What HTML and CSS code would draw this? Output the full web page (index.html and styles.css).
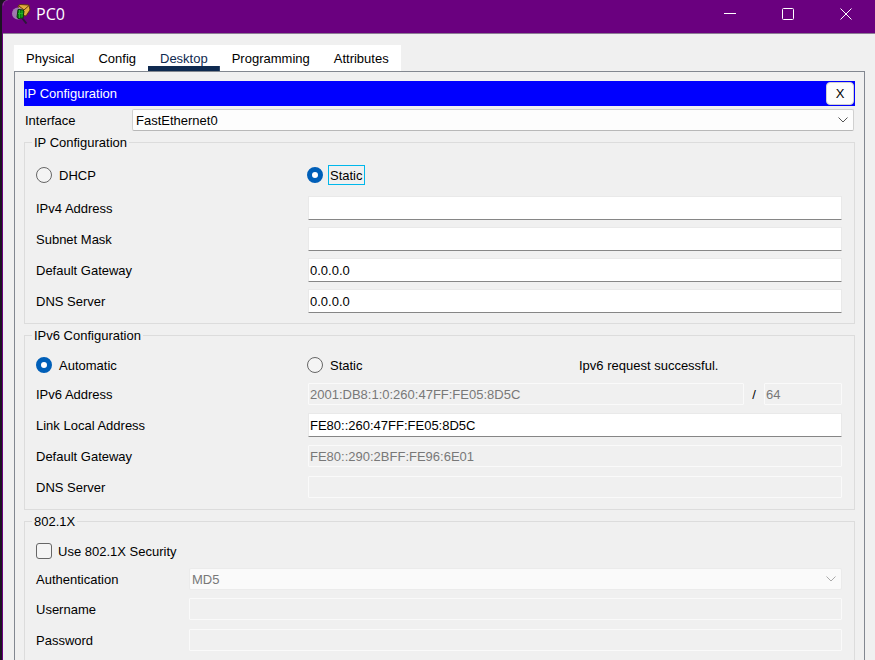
FILE: index.html
```html
<!DOCTYPE html>
<html lang="en">
<head>
<meta charset="utf-8">
<meta name="viewport" content="width=device-width, initial-scale=1">
<title>PC0</title>
<link rel="stylesheet" href="styles.css">
</head>
<body>
<div class="window">
  <header class="titlebar">
    <svg class="app-icon" viewBox="0 0 20 20" aria-hidden="true">
      <path d="M7 2l2-1.500L18 1l1 5-4 6-6-1z" fill="#e0ab3c" stroke="#5c3510" stroke-width="1"/>
      <path d="M8 2l5 4 5-4.500" fill="none" stroke="#5c3510"/>
      <circle cx="7" cy="9.500" r="6" fill="#a078ae"/>
      <path d="M7 5.500l5 .5 1 1-1 7-5 .5L6 13z" fill="#087a12" stroke="#07370a"/>
      <path d="M8.500 6v8M11 6.500v7M7 9.500h5" stroke="#22b527" fill="none"/>
      <path d="M11.500 14.500l4 5" stroke="#2b1838" stroke-width="2"/>
    </svg>
    <h1 class="title">PC0</h1>
    <button class="win-btn" type="button" aria-label="Minimize"><svg viewBox="0 0 12 12"><path d="M0 5.500h12"/></svg></button>
    <button class="win-btn" type="button" aria-label="Maximize"><svg viewBox="0 0 12 12"><rect x=".5" y=".5" width="11" height="11" rx="1"/></svg></button>
    <button class="win-btn" type="button" aria-label="Close"><svg viewBox="0 0 12 12"><path d="M.5.5l11 11M11.500.5l-11 11"/></svg></button>
  </header>

  <main class="content">
    <nav class="tabs">
      <button class="tab" type="button">Physical</button>
      <button class="tab" type="button">Config</button>
      <button class="tab tab-active" type="button">Desktop</button>
      <button class="tab" type="button">Programming</button>
      <button class="tab" type="button">Attributes</button>
    </nav>

    <form class="panel">
      <div class="bar">
        <h2 class="bar-title">IP Configuration</h2>
        <button class="bar-close" type="button">X</button>
      </div>

      <div class="interface">
        <label for="iface">Interface</label>
        <div class="select">
          <select id="iface"><option>FastEthernet0</option></select>
          <svg class="chevron" viewBox="0 0 10 6" aria-hidden="true"><path d="M.5.5L5 5 9.500.5"/></svg>
        </div>
      </div>

      <fieldset class="group group-v4">
        <legend>IP Configuration</legend>
        <div class="modes">
          <label class="choice"><input type="radio" name="v4"><span>DHCP</span></label>
          <label class="choice"><input type="radio" name="v4" checked><span class="focused">Static</span></label>
        </div>
        <div class="row"><label for="ip4">IPv4 Address</label><input class="field" id="ip4" type="text"></div>
        <div class="row"><label for="mask">Subnet Mask</label><input class="field" id="mask" type="text"></div>
        <div class="row"><label for="gw4">Default Gateway</label><input class="field" id="gw4" type="text" value="0.0.0.0"></div>
        <div class="row"><label for="dns4">DNS Server</label><input class="field" id="dns4" type="text" value="0.0.0.0"></div>
      </fieldset>

      <fieldset class="group">
        <legend>IPv6 Configuration</legend>
        <div class="modes">
          <label class="choice"><input type="radio" name="v6" checked><span>Automatic</span></label>
          <label class="choice"><input type="radio" name="v6"><span>Static</span></label>
          <output class="status">Ipv6 request successful.</output>
        </div>
        <div class="row">
          <label for="ip6">IPv6 Address</label>
          <div class="prefixed">
            <input class="field" id="ip6" type="text" value="2001:DB8:1:0:260:47FF:FE05:8D5C" disabled>
            <label class="slash" for="prefix">/</label>
            <input class="field field-prefix" id="prefix" type="text" value="64" disabled>
          </div>
        </div>
        <div class="row"><label for="ll">Link Local Address</label><input class="field" id="ll" type="text" value="FE80::260:47FF:FE05:8D5C"></div>
        <div class="row"><label for="gw6">Default Gateway</label><input class="field" id="gw6" type="text" value="FE80::290:2BFF:FE96:6E01" disabled></div>
        <div class="row"><label for="dns6">DNS Server</label><input class="field" id="dns6" type="text" disabled></div>
      </fieldset>

      <fieldset class="group group-auth">
        <legend>802.1X</legend>
        <label class="choice"><input type="checkbox"><span>Use 802.1X Security</span></label>
        <div class="row">
          <label for="auth">Authentication</label>
          <div class="select">
            <select id="auth" disabled><option>MD5</option></select>
            <svg class="chevron" viewBox="0 0 10 6" aria-hidden="true"><path d="M.5.5L5 5 9.500.5"/></svg>
          </div>
        </div>
        <div class="row"><label for="user">Username</label><input class="field" id="user" type="text" disabled></div>
        <div class="row"><label for="pass">Password</label><input class="field" id="pass" type="password" disabled></div>
      </fieldset>
    </form>
  </main>
</div>
</body>
</html>
```

FILE: styles.css
```css
* { box-sizing: border-box; }

body {
  margin: 0;
  height: 100vh;
  overflow: hidden;
  padding-left: 2px;
  background: #1c1322;
  color: #000;
  font: 13px/16px "Liberation Sans", Arial, sans-serif;
}

button, input, select { font: inherit; color: inherit; }

.window {
  min-height: 100%;
  background: #f0f0f0;
  border-left: 1px solid #6a007f;
  border-top-left-radius: 6px;
  overflow: hidden;
}

/* Title bar */
.titlebar {
  display: flex;
  align-items: center;
  height: 34px;
  padding: 0 0 6px 8px;
  background: #6a007f;
  border-bottom: 1px solid #8c7c94;
}
.app-icon { width: 20px; height: 20px; }
.title {
  flex: 1;
  margin: 0;
  padding-left: 5px;
  color: #fff;
  font: 16px/20px "Open Sans", "Noto Sans", sans-serif;
}
.win-btn {
  display: grid;
  place-items: center;
  width: 58px;
  height: 28px;
  padding: 0;
  border: 0;
  background: none;
}
.win-btn svg {
  width: 12px;
  height: 12px;
  fill: none;
  stroke: #fff;
}

/* Tabs */
.content { padding: 11px 10px 0 11px; }
.tabs {
  display: flex;
  width: max-content;
  background: #fff;
}
.tab {
  height: 26px;
  padding: 2px 12px 0;
  border: 0;
  background: none;
}
.tab-active {
  color: #0f2a50;
  background: linear-gradient(#0f2a50, #0f2a50) bottom / 100% 5px no-repeat;
}

.panel {
  display: flex;
  flex-direction: column;
  gap: 3px;
  padding: 9px;
  border: 1px solid #828790;
}

.bar {
  display: flex;
  align-items: center;
  justify-content: space-between;
  height: 25px;
  padding-right: 1px;
  background: #00f;
}
.bar-title {
  margin: 0;
  color: #fff;
  font: inherit;
}
.bar-close {
  width: 28px;
  height: 23px;
  padding: 0;
  border: 1px solid #d0d0d0;
  border-radius: 4px;
  background: #fdfdfd;
}

.interface {
  display: grid;
  grid-template-columns: 107px 1fr;
  align-items: center;
  padding: 0 1px;
}
.interface label, .row label, .status { padding-top: 2px; }

/* Drop-downs */
.select { position: relative; }
.select select {
  display: block;
  width: 100%;
  height: 22px;
  padding: 2px 24px 0 3px;
  border: 1px solid #d0d0d0;
  border-bottom-color: #b8b8b8;
  border-radius: 2px;
  background: #fdfdfd;
  appearance: none;
}
.select select:disabled {
  padding-left: 2px;
  border-color: #ebebeb;
  background: #fafafa;
  color: #787878;
  opacity: 1;
}
.chevron {
  position: absolute;
  top: 8px;
  right: 6px;
  width: 10px;
  height: 6px;
  fill: none;
  stroke: #555;
  pointer-events: none;
}
select:disabled + .chevron { stroke: #aaa; }

/* Groups */
.group {
  display: grid;
  gap: 7px;
  min-width: 0;
  margin: 0;
  padding: 12px 12px 10px 11px;
  border: 1px solid #dcdcdc;
}
.group legend {
  height: 16px;
  margin-left: -4px;
  padding: 0 2px;
  line-height: 18px;
}
.group-v4 { padding-top: 15px; }
.group-v4 .modes { margin-bottom: 4px; }

.modes {
  display: grid;
  grid-template-columns: 271px 272px 1fr;
  align-items: center;
  height: 20px;
}
.row {
  display: grid;
  grid-template-columns: 272px 1fr;
  align-items: center;
}
.group-auth .row { grid-template-columns: 153px 1fr; }

.choice {
  display: flex;
  align-items: center;
  gap: 5px;
  height: 20px;
}
.choice span {
  height: 20px;
  padding: 0 1px;
  border: 1px solid transparent;
  line-height: 20px;
}
.group-auth .choice { gap: 4px; }
.choice .focused { border-color: #00b7eb; }
.choice input {
  width: 16px;
  height: 16px;
  margin: 0;
  border: 1px solid #666;
  background: #f4f4f4;
  appearance: none;
}
.choice input[type="radio"] { border-radius: 50%; }
.choice input[type="checkbox"] { border-radius: 3px; }
.choice input[type="radio"]:checked {
  border: 5px solid #005fb8;
  background: #fff;
}

/* Text boxes */
.field {
  width: 100%;
  min-width: 0;
  height: 24px;
  padding: 0 1px;
  border: 1px solid #e9e9e9;
  border-bottom-color: #868686;
  border-radius: 1px;
  background: #fff;
}
.field:disabled {
  height: 22px;
  margin: 1px 0;
  border-color: #fafafa;
  background: #f0f0f0;
  color: #787878;
}
.prefixed { display: flex; align-items: center; }
.prefixed .field { flex: 1; }
.prefixed .field-prefix { flex: 0 0 78px; }
.slash { width: 20px; text-align: center; }
```
